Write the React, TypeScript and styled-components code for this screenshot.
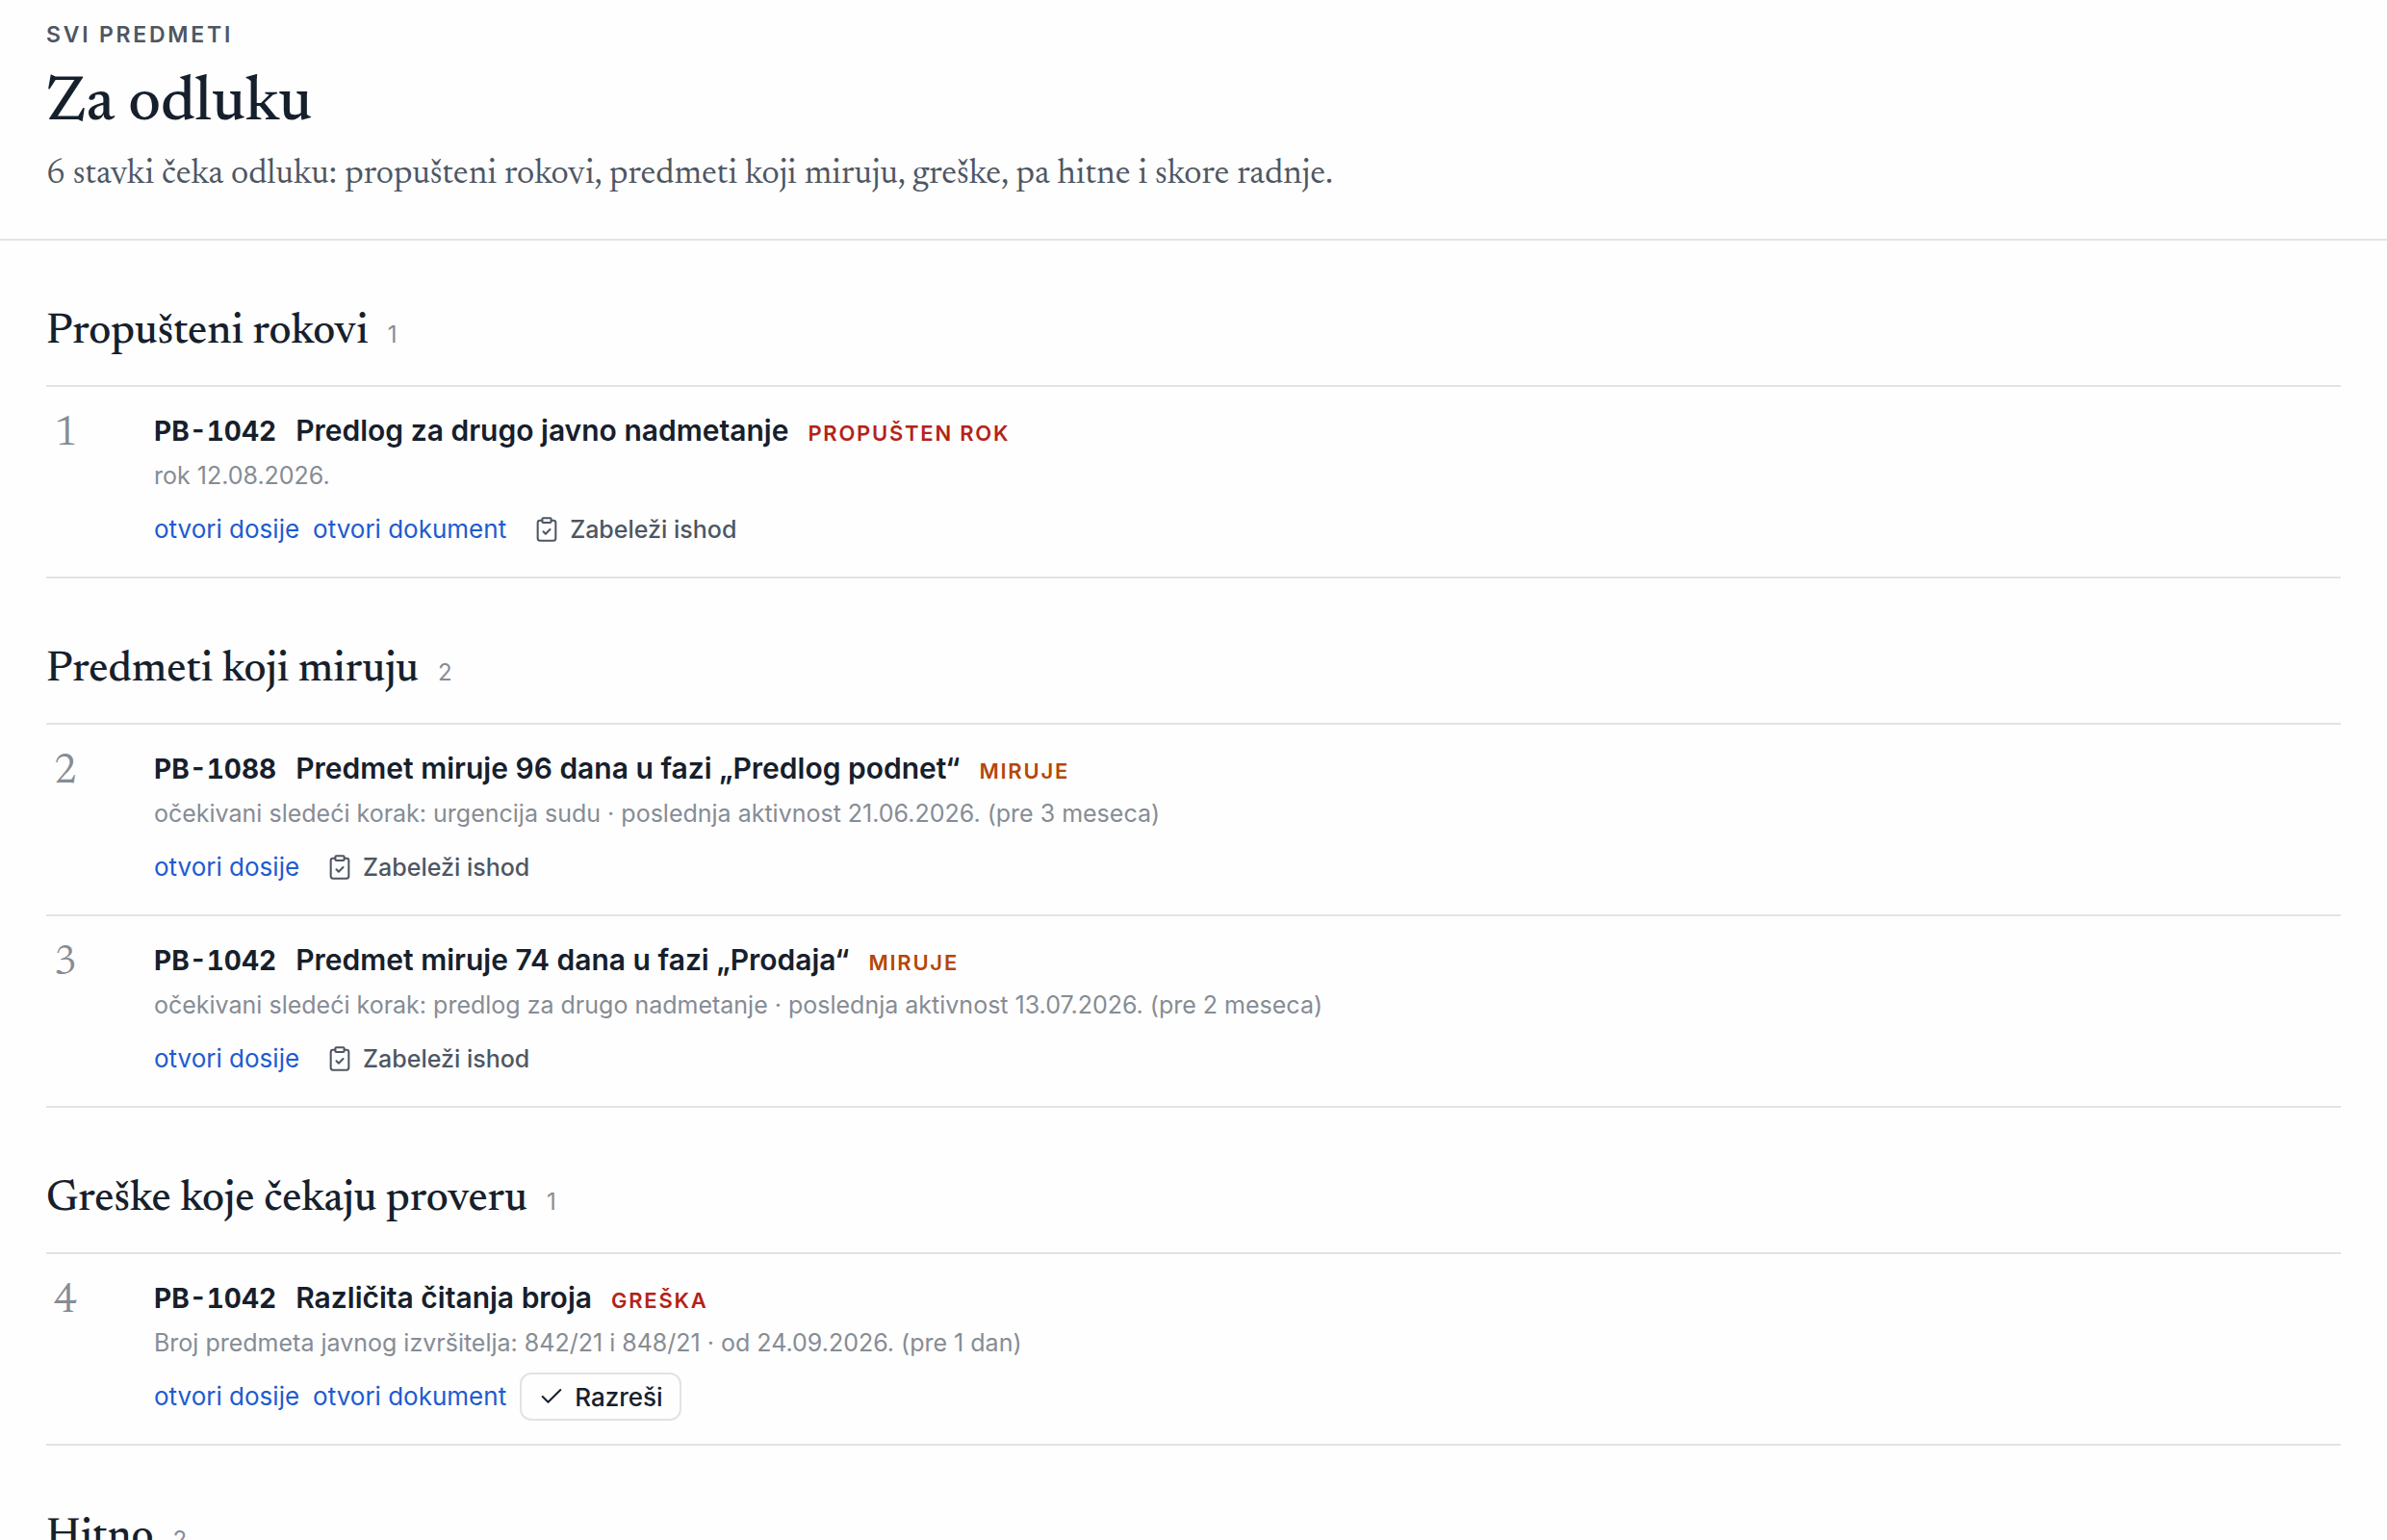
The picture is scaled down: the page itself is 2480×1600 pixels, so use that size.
import React from "react";
import styled, { createGlobalStyle } from "styled-components";
import { Check, ClipboardCheck } from "lucide-react";

const sans = `Inter, "Noto Sans", sans-serif`;
const serif = `Newsreader, "Liberation Serif", serif`;

const GlobalStyle = createGlobalStyle`
  *, *::before, *::after { box-sizing: border-box; }
  body { margin: 0; background: #fefefe; color: #16202c; font-family: ${sans}; }
  h1, h2, h3, p, ol { margin: 0; padding: 0; }
`;

const PageHeader = styled.header`
  padding: 16px 48px 42px;
  border-bottom: 2px solid #e1e3e4;
`;

const Eyebrow = styled.p`
  font-size: 23px;
  line-height: 40px;
  font-weight: 600;
  letter-spacing: 0.12em;
  text-transform: uppercase;
  color: #4e5663;
`;

const PageTitle = styled.h1`
  margin-top: 14px;
  font-family: ${serif};
  font-size: 66px;
  line-height: 76px;
  font-weight: 500;
`;

const Lead = styled.p`
  margin-top: 12px;
  font-family: ${serif};
  font-size: 36px;
  line-height: 48px;
  color: #4e5663;
`;

const Main = styled.main`
  padding: 0 48px;
`;

const Section = styled.section`
  padding-top: 64px;
`;

const SectionHead = styled.div`
  display: flex;
  align-items: baseline;
  gap: 20px;
  padding-bottom: 22px;
`;

const SectionTitle = styled.h2`
  font-family: ${serif};
  font-size: 45px;
  line-height: 64px;
  font-weight: 500;
`;

const Count = styled.span`
  font-size: 24px;
  line-height: 32px;
  color: #868c94;
`;

const List = styled.ol`
  list-style: none;
  border-top: 2px solid #e1e3e4;
`;

const Item = styled.li`
  display: grid;
  grid-template-columns: 40px 1fr;
  column-gap: 72px;
  padding: 23px 0 24px;
  border-bottom: 2px solid #e1e3e4;
`;

const Rank = styled.span`
  font-family: ${serif};
  font-size: 44px;
  line-height: 54px;
  text-align: center;
  color: #868c94;
`;

const ItemHead = styled.div`
  display: flex;
  align-items: baseline;
  flex-wrap: wrap;
  column-gap: 20px;
`;

const CaseId = styled.span`
  font-size: 28px;
  line-height: 40px;
  font-weight: 700;
  font-variant-numeric: tabular-nums;
`;

const ItemTitle = styled.h3`
  font-size: 30px;
  line-height: 44px;
  font-weight: 600;
`;

const Tag = styled.span<{ $tone: "danger" | "warn" }>`
  font-size: 22px;
  line-height: 32px;
  font-weight: 600;
  letter-spacing: 0.08em;
  text-transform: uppercase;
  color: ${(p) => (p.$tone === "danger" ? "#b42318" : "#b54708")};
`;

const Detail = styled.p`
  margin-top: 5px;
  font-size: 25px;
  line-height: 40px;
  color: #868c94;
`;

const Actions = styled.div`
  display: flex;
  align-items: center;
  flex-wrap: wrap;
  gap: 14px;
  margin-top: 11px;
`;

const ActionLink = styled.a`
  font-size: 26px;
  line-height: 40px;
  color: #1d5bd0;
  text-decoration: none;
`;

const ActionButton = styled.button<{ $outlined?: boolean }>`
  display: inline-flex;
  align-items: center;
  gap: 10px;
  height: 50px;
  padding: 0 ${(p) => (p.$outlined ? 17 : 12)}px;
  border: 2px solid ${(p) => (p.$outlined ? "#e1e3e4" : "transparent")};
  border-radius: 12px;
  background: transparent;
  color: ${(p) => (p.$outlined ? "#16202c" : "#4e5663")};
  font-family: ${sans};
  font-size: ${(p) => (p.$outlined ? 26 : 25)}px;
  font-weight: 500;
  cursor: pointer;
`;

type Entry = {
  rank: number;
  id: string;
  title: string;
  tag: string;
  tone: "danger" | "warn";
  detail: string;
  document?: boolean;
  action: "record" | "resolve";
};

const sections: { title: string; count: number; entries: Entry[] }[] = [
  {
    title: "Propušteni rokovi",
    count: 1,
    entries: [
      { rank: 1, id: "PB-1042", title: "Predlog za drugo javno nadmetanje", tag: "Propušten rok", tone: "danger", detail: "rok 12.08.2026.", document: true, action: "record" },
    ],
  },
  {
    title: "Predmeti koji miruju",
    count: 2,
    entries: [
      { rank: 2, id: "PB-1088", title: "Predmet miruje 96 dana u fazi „Predlog podnet“", tag: "Miruje", tone: "warn", detail: "očekivani sledeći korak: urgencija sudu · poslednja aktivnost 21.06.2026. (pre 3 meseca)", action: "record" },
      { rank: 3, id: "PB-1042", title: "Predmet miruje 74 dana u fazi „Prodaja“", tag: "Miruje", tone: "warn", detail: "očekivani sledeći korak: predlog za drugo nadmetanje · poslednja aktivnost 13.07.2026. (pre 2 meseca)", action: "record" },
    ],
  },
  {
    title: "Greške koje čekaju proveru",
    count: 1,
    entries: [
      { rank: 4, id: "PB-1042", title: "Različita čitanja broja", tag: "Greška", tone: "danger", detail: "Broj predmeta javnog izvršitelja: 842/21 i 848/21 · od 24.09.2026. (pre 1 dan)", document: true, action: "resolve" },
    ],
  },
  { title: "Hitno", count: 2, entries: [] },
];

function EntryRow({ entry }: { entry: Entry }) {
  return (
    <Item>
      <Rank>{entry.rank}</Rank>
      <div>
        <ItemHead>
          <CaseId>{entry.id}</CaseId>
          <ItemTitle>{entry.title}</ItemTitle>
          <Tag $tone={entry.tone}>{entry.tag}</Tag>
        </ItemHead>
        <Detail>{entry.detail}</Detail>
        <Actions>
          <ActionLink href="#dosije">otvori dosije</ActionLink>
          {entry.document && <ActionLink href="#dokument">otvori dokument</ActionLink>}
          {entry.action === "record" ? (
            <ActionButton type="button">
              <ClipboardCheck size={28} strokeWidth={1.75} aria-hidden />
              Zabeleži ishod
            </ActionButton>
          ) : (
            <ActionButton type="button" $outlined>
              <Check size={28} strokeWidth={1.75} aria-hidden />
              Razreši
            </ActionButton>
          )}
        </Actions>
      </div>
    </Item>
  );
}

export default function App() {
  return (
    <>
      <GlobalStyle />
      <PageHeader>
        <Eyebrow>Svi predmeti</Eyebrow>
        <PageTitle>Za odluku</PageTitle>
        <Lead>6 stavki čeka odluku: propušteni rokovi, predmeti koji miruju, greške, pa hitne i skore radnje.</Lead>
      </PageHeader>
      <Main>
        {sections.map((section) => (
          <Section key={section.title}>
            <SectionHead>
              <SectionTitle>{section.title}</SectionTitle>
              <Count>{section.count}</Count>
            </SectionHead>
            <List>
              {section.entries.map((entry) => (
                <EntryRow key={entry.rank} entry={entry} />
              ))}
            </List>
          </Section>
        ))}
      </Main>
    </>
  );
}
